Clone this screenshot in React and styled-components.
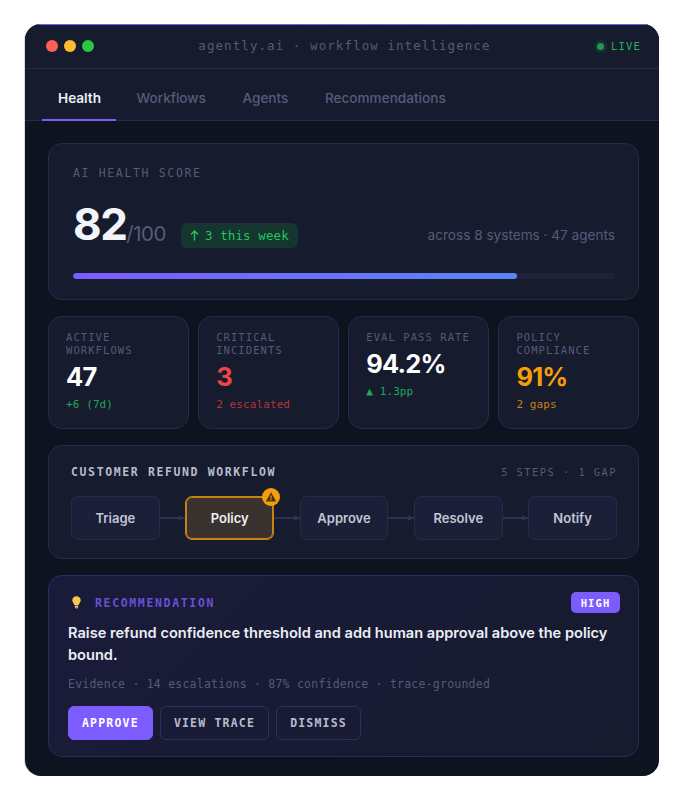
import React from 'react';
import styled, { createGlobalStyle } from 'styled-components';

const mono = `"DejaVu Sans Mono", "Liberation Mono", monospace`;
const sans = `Inter, "Liberation Sans", sans-serif`;

const GlobalStyle = createGlobalStyle`
  html, body { margin: 0; padding: 0; background: #ffffff; }
  * { box-sizing: border-box; }
  body { font-family: ${sans}; }
`;

const Page = styled.div`
  width: 677px;
  height: 788px;
  padding: 24px 18px 12px 25px;
`;

const Window = styled.div`
  position: relative;
  height: 752px;
  border-radius: 16px;
  overflow: hidden;
  background: #0f1320;
  box-shadow: -1px 0 0 #d9d9e6;
  &::before {
    content: '';
    position: absolute;
    top: 0; left: 0; right: 0;
    height: 1px;
    background: linear-gradient(90deg, #7c5cfc, #5b6cf5);
  }
`;

const TitleBar = styled.div`
  height: 45px;
  display: flex;
  align-items: center;
  justify-content: space-between;
  padding: 0 18px 0 21px;
  background: #161b2e;
  border-bottom: 1px solid #272b49;
`;

const Dots = styled.div`
  display: flex;
  gap: 6px;
`;

const Dot = styled.span`
  width: 12px;
  height: 12px;
  border-radius: 50%;
  background: ${p => p.$color};
`;

const WindowTitle = styled.div`
  font: 400 12.5px ${mono};
  letter-spacing: 1.07px;
  color: #565a78;
  margin-left: -2px;
  padding-bottom: 2px;
`;

const Live = styled.div`
  display: flex;
  align-items: center;
  gap: 7px;
  font: 500 10.5px ${mono};
  letter-spacing: 1.2px;
  color: #22b35e;
`;

const LiveDot = styled.span`
  width: 7px;
  height: 7px;
  border-radius: 50%;
  background: #22994f;
  box-shadow: 0 0 0 3px rgba(34, 197, 94, 0.12);
`;

const Tabs = styled.div`
  height: 52px;
  display: flex;
  padding-left: 17px;
  background: #161b2e;
  border-bottom: 1px solid #272b49;
`;

const Tab = styled.div`
  position: relative;
  display: flex;
  align-items: center;
  padding: 6px 16px 0;
  margin-right: ${p => (p.$active ? 3.5 : 4.5)}px;
  font: ${p => (p.$active ? 600 : 500)} 13.6px ${sans};
  color: ${p => (p.$active ? '#eef0f8' : '#565b79')};
  ${p => p.$active && `
    &::after {
      content: '';
      position: absolute;
      left: 0; right: 1px; bottom: -1px;
      height: 2px;
      background: #7c5cfc;
    }
  `}
`;

const Content = styled.div`
  display: flex;
  flex-direction: column;
  gap: 16px;
  padding: 22px 20px 0 23px;
`;

const Card = styled.div`
  background: #161b2e;
  border: 1px solid #272b49;
  border-radius: 14px;
`;

const ScoreCard = styled(Card)`
  height: 157px;
  padding: 22px 23px 0 24px;
`;

const Eyebrow = styled.div`
  font: 400 11.5px ${mono};
  letter-spacing: 1.65px;
  color: #565a78;
`;

const ScoreRow = styled.div`
  display: flex;
  align-items: flex-end;
  height: 50px;
  margin-top: 19px;
`;

const ScoreValue = styled.span`
  font: 700 44px/50px ${sans};
  letter-spacing: -1.5px;
  color: #f3f4fa;
`;

const ScoreMax = styled.span`
  font: 400 20.5px/24px ${sans};
  letter-spacing: -0.5px;
  color: #565b79;
  margin-bottom: 3px;
`;

const TrendBadge = styled.span`
  height: 25px;
  display: inline-flex;
  align-items: center;
  gap: 6px;
  margin: 0 0 1px 15px;
  padding: 0 9px;
  border-radius: 6px;
  background: #15362f;
  font: 500 12.5px ${mono};
  letter-spacing: 0.1px;
  color: #22c55e;
`;

const ScoreNote = styled.span`
  margin-left: auto;
  margin-bottom: 5px;
  font: 400 13.6px/18px ${sans};
  color: #565b79;
`;

const Track = styled.div`
  height: 6px;
  margin-top: 24px;
  border-radius: 3px;
  background: #1e2339;
  overflow: hidden;
`;

const Fill = styled.div`
  height: 100%;
  border-radius: 3px;
  background: linear-gradient(90deg, #7c5cfc, #5b84f5);
`;

const Stats = styled.div`
  display: grid;
  grid-template-columns: repeat(4, 1fr);
  gap: 9.5px;
`;

const StatCard = styled(Card)`
  height: 113px;
  padding: 14px 10px 0 17px;
`;

const StatLabel = styled.div`
  font: 400 10.5px/13px ${mono};
  letter-spacing: 1.08px;
  color: #565a78;
`;

const StatValue = styled.div`
  font: 700 25.5px/32px ${sans};
  letter-spacing: -0.8px;
  margin-top: 4px;
  color: ${p => p.$color};
`;

const StatSub = styled.div`
  font: 400 11px/14px ${mono};
  letter-spacing: 0.1px;
  margin-top: 5px;
  color: ${p => p.$color};
`;

const WorkflowCard = styled(Card)`
  height: 114px;
  padding: 18px 21px 0 22px;
`;

const WorkflowHead = styled.div`
  display: flex;
  justify-content: space-between;
  align-items: center;
  height: 16px;
`;

const WorkflowTitle = styled.div`
  font: 700 11.5px ${mono};
  letter-spacing: 1.62px;
  color: #b9bccd;
`;

const WorkflowMeta = styled.div`
  font: 400 10.5px ${mono};
  letter-spacing: 1.4px;
  color: #565a78;
`;

const Steps = styled.div`
  display: flex;
  align-items: center;
  margin-top: 16px;
`;

const Step = styled.div`
  position: relative;
  flex: 1;
  height: 44px;
  display: flex;
  align-items: center;
  justify-content: center;
  border-radius: 7px;
  font: 600 13px ${sans};
  border: 1px solid ${p => (p.$warn ? '#c9820f' : '#272b49')};
  box-shadow: ${p => (p.$warn ? 'inset 0 0 0 1px #c9820f' : 'none')};
  background: ${p => (p.$warn ? '#3a322e' : '#1b2038')};
  color: ${p => (p.$warn ? '#f0f0f4' : '#c3c5d4')};
`;

const Connector = styled.div`
  position: relative;
  flex: 0 0 25.5px;
  height: 2px;
  background: #2d3258;
  &::after {
    content: '';
    position: absolute;
    right: 0;
    top: -2.5px;
    border-left: 6px solid #2d3258;
    border-top: 3.5px solid transparent;
    border-bottom: 3.5px solid transparent;
  }
`;

const WarnBadge = styled.span`
  position: absolute;
  top: -9px;
  right: -7px;
  width: 18px;
  height: 18px;
  border-radius: 50%;
  background: #f59e0b;
  display: flex;
  align-items: center;
  justify-content: center;
`;

const RecCard = styled(Card)`
  height: 182px;
  padding: 16px 18px 0 19px;
  border-color: #2c2a5c;
  background: linear-gradient(135deg, #1a1b3a 0%, #161b2e 100%);
`;

const RecHead = styled.div`
  display: flex;
  align-items: center;
  height: 21px;
  padding-left: 4px;
`;

const RecLabel = styled.div`
  font: 700 11.5px ${mono};
  letter-spacing: 1.65px;
  color: #6a50d8;
  margin-left: 14px;
`;

const HighBadge = styled.span`
  margin-left: auto;
  height: 21px;
  width: 49px;
  display: flex;
  align-items: center;
  justify-content: center;
  border-radius: 5px;
  background: #7c5cfc;
  font: 700 10.5px ${mono};
  letter-spacing: 1.1px;
  color: #ffffff;
`;

const RecTitle = styled.div`
  font: 600 14.6px/22px ${sans};
  color: #eceef6;
  margin-top: 9px;
`;

const RecEvidence = styled.div`
  font: 400 11.5px/14px ${mono};
  letter-spacing: 0.23px;
  color: #565a78;
  margin-top: 11px;
`;

const Actions = styled.div`
  display: flex;
  gap: 7px;
  margin-top: 15px;
`;

const Action = styled.button`
  height: 34px;
  padding: 0 13px;
  border-radius: 6px;
  font: 700 11.5px ${mono};
  letter-spacing: 1.2px;
  border: 1px solid ${p => (p.$primary ? '#7c5cfc' : '#2d3258')};
  background: ${p => (p.$primary ? '#7c5cfc' : 'transparent')};
  color: ${p => (p.$primary ? '#ffffff' : '#b9bccd')};
`;

const steps = ['Triage', 'Policy', 'Approve', 'Resolve', 'Notify'];

const stats = [
  { label: ['ACTIVE', 'WORKFLOWS'], value: '47', color: '#ffffff', sub: '+6 (7d)', subColor: '#1fa855' },
  { label: ['CRITICAL', 'INCIDENTS'], value: '3', color: '#ef4444', sub: '2 escalated', subColor: '#b5343a' },
  { label: ['EVAL PASS RATE'], value: '94.2%', color: '#ffffff', sub: '▲ 1.3pp', subColor: '#1fa855' },
  { label: ['POLICY', 'COMPLIANCE'], value: '91%', color: '#f59e0b', sub: '2 gaps', subColor: '#c9820f' },
];

const ArrowUp = () => (
  <svg width="9" height="11" viewBox="0 0 9 11" fill="none" stroke="#22c55e" strokeWidth="1.4">
    <path d="M4.5 10.5 V1 M0.9 4.6 L4.5 1 L8.1 4.6" />
  </svg>
);

const WarnIcon = () => (
  <svg width="12" height="12" viewBox="0 0 12 12">
    <path d="M6 1.2 L11.2 10.4 H0.8 Z" fill="#4a3410" />
    <rect x="5.4" y="4.4" width="1.2" height="3" fill="#f59e0b" />
    <rect x="5.4" y="8" width="1.2" height="1.2" fill="#f59e0b" />
  </svg>
);

const BulbIcon = () => (
  <svg width="9" height="13" viewBox="0 0 9 13">
    <path d="M4.5 0.3 C2 0.3 0.3 2 0.3 4.2 C0.3 6 1.6 6.9 2.4 9 H6.6 C7.4 6.9 8.7 6 8.7 4.2 C8.7 2 7 0.3 4.5 0.3 Z" fill="#fbc94a" />
    <rect x="2.8" y="9.4" width="3.4" height="2.4" rx="0.6" fill="#c9c6c0" />
    <rect x="3.5" y="11.8" width="2" height="1" rx="0.5" fill="#8f8d8a" />
  </svg>
);

export default function App() {
  return (
    <Page>
      <GlobalStyle />
      <Window>
        <TitleBar>
          <Dots>
            <Dot $color="#ff5f57" />
            <Dot $color="#febc2e" />
            <Dot $color="#28c840" />
          </Dots>
          <WindowTitle>agently.ai · workflow intelligence</WindowTitle>
          <Live><LiveDot />LIVE</Live>
        </TitleBar>
        <Tabs>
          <Tab $active>Health</Tab>
          <Tab>Workflows</Tab>
          <Tab>Agents</Tab>
          <Tab>Recommendations</Tab>
        </Tabs>
        <Content>
          <ScoreCard>
            <Eyebrow>AI HEALTH SCORE</Eyebrow>
            <ScoreRow>
              <ScoreValue>82</ScoreValue>
              <ScoreMax>/100</ScoreMax>
              <TrendBadge><ArrowUp />3 this week</TrendBadge>
              <ScoreNote>across 8 systems · 47 agents</ScoreNote>
            </ScoreRow>
            <Track><Fill style={{ width: '82%' }} /></Track>
          </ScoreCard>

          <Stats>
            {stats.map(s => (
              <StatCard key={s.value}>
                <StatLabel>{s.label.map(l => <div key={l}>{l}</div>)}</StatLabel>
                <StatValue $color={s.color}>{s.value}</StatValue>
                <StatSub $color={s.subColor}>{s.sub}</StatSub>
              </StatCard>
            ))}
          </Stats>

          <WorkflowCard>
            <WorkflowHead>
              <WorkflowTitle>CUSTOMER REFUND WORKFLOW</WorkflowTitle>
              <WorkflowMeta>5 STEPS · 1 GAP</WorkflowMeta>
            </WorkflowHead>
            <Steps>
              {steps.map((name, i) => (
                <React.Fragment key={name}>
                  {i > 0 && <Connector />}
                  <Step $warn={name === 'Policy'}>
                    {name}
                    {name === 'Policy' && <WarnBadge><WarnIcon /></WarnBadge>}
                  </Step>
                </React.Fragment>
              ))}
            </Steps>
          </WorkflowCard>

          <RecCard>
            <RecHead>
              <BulbIcon />
              <RecLabel>RECOMMENDATION</RecLabel>
              <HighBadge>HIGH</HighBadge>
            </RecHead>
            <RecTitle>Raise refund confidence threshold and add human approval above the policy bound.</RecTitle>
            <RecEvidence>Evidence · 14 escalations · 87% confidence · trace-grounded</RecEvidence>
            <Actions>
              <Action $primary>APPROVE</Action>
              <Action>VIEW TRACE</Action>
              <Action>DISMISS</Action>
            </Actions>
          </RecCard>
        </Content>
      </Window>
    </Page>
  );
}
